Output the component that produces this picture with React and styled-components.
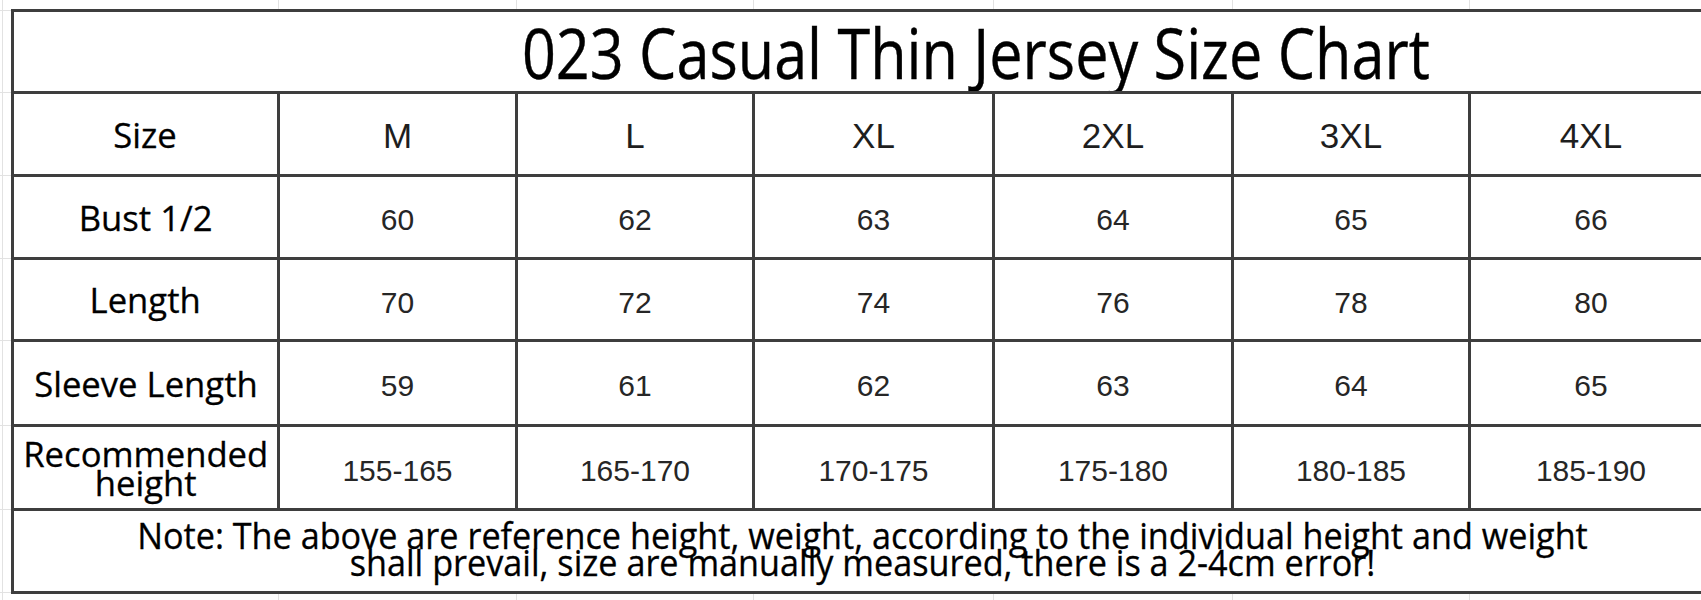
import React from 'react';
import styled, { createGlobalStyle } from 'styled-components';

const GlobalStyle = createGlobalStyle`
  html, body {
    margin: 0;
    padding: 0;
    background: #fff;
  }
`;

const gridX = [2, 278, 516, 753, 993, 1232, 1469];
const gridY = [10, 92, 175, 258, 340, 425, 509, 592];

const sheetLines = [
  ...gridX.map((x) => `linear-gradient(#e2e2e2, #e2e2e2) ${x}px 0 / 1px 100% no-repeat`),
  ...gridY.map((y) => `linear-gradient(#e2e2e2, #e2e2e2) 0 ${y}px / 100% 1px no-repeat`),
].join(', ');

const Sheet = styled.div`
  width: 1701px;
  height: 600px;
  overflow: hidden;
  padding: 9px 0 0 11px;
  box-sizing: border-box;
  background: ${sheetLines};
`;

const Table = styled.div`
  display: grid;
  grid-template-columns: 263px 235px 234px 237px 236px 234px 240px;
  grid-template-rows: 79px 80px 80px 79px 82px 81px 80px;
  gap: 3px;
  padding: 3px;
  width: max-content;
  background: #3e3e3e;
`;

const Cell = styled.div`
  background: #fff;
  display: flex;
  align-items: center;
  justify-content: center;
  text-align: center;
  overflow: hidden;
`;

const TitleCell = styled(Cell)`
  grid-column: 1 / -1;
  padding-left: 226px;
`;

const Squeeze = styled.span`
  display: inline-block;
  white-space: nowrap;
  transform: scaleX(${(p) => p.$x || 0.86});
`;

const Title = styled(Squeeze)`
  font-family: 'Open Sans', 'Noto Sans', sans-serif;
  font-size: 69px;
  line-height: 1;
  color: #000;
  margin-top: 2px;
  -webkit-text-stroke: 0.4px #000;
`;

const Label = styled(Squeeze)`
  font-family: 'Open Sans', 'Noto Sans', sans-serif;
  font-size: 35px;
  line-height: 29px;
  color: #000;
  -webkit-text-stroke: 0.3px #000;
`;

const Head = styled.span`
  font-family: 'Liberation Sans', Arial, sans-serif;
  font-size: 35px;
  color: #1e1e1e;
  margin-top: 4px;
`;

const Value = styled.span`
  font-family: 'Liberation Sans', Arial, sans-serif;
  font-size: 30px;
  color: #262626;
  margin-top: 6px;
`;

const NoteCell = styled(Cell)`
  grid-column: 1 / -1;
  padding-bottom: 4px;
`;

const Note = styled(Squeeze)`
  font-family: 'Open Sans', 'Noto Sans', sans-serif;
  font-size: 36px;
  line-height: 27px;
  color: #000;
  -webkit-text-stroke: 0.3px #000;
`;

const sizes = ['M', 'L', 'XL', '2XL', '3XL', '4XL'];

const rows = [
  { label: 'Bust 1/2', values: ['60', '62', '63', '64', '65', '66'] },
  { label: 'Length', values: ['70', '72', '74', '76', '78', '80'] },
  { label: 'Sleeve Length', values: ['59', '61', '62', '63', '64', '65'] },
  {
    label: (
      <>
        Recommended
        <br />
        height
      </>
    ),
    values: ['155-165', '165-170', '170-175', '175-180', '180-185', '185-190'],
  },
];

export default function App() {
  return (
    <>
      <GlobalStyle />
      <Sheet>
        <Table>
          <TitleCell>
            <Title>023 Casual Thin Jersey Size Chart</Title>
          </TitleCell>

          <Cell>
            <Label $x={0.99}>Size</Label>
          </Cell>
          {sizes.map((s) => (
            <Cell key={s}>
              <Head>{s}</Head>
            </Cell>
          ))}

          {rows.map((row, i) => (
            <React.Fragment key={i}>
              <Cell>
                <Label $x={0.99}>{row.label}</Label>
              </Cell>
              {row.values.map((v, j) => (
                <Cell key={j}>
                  <Value>{v}</Value>
                </Cell>
              ))}
            </React.Fragment>
          ))}

          <NoteCell>
            <Note $x={0.95}>
              Note: The above are reference height, weight, according to the individual height and weight
              <br />
              shall prevail, size are manually measured, there is a 2-4cm error!
            </Note>
          </NoteCell>
        </Table>
      </Sheet>
    </>
  );
}
